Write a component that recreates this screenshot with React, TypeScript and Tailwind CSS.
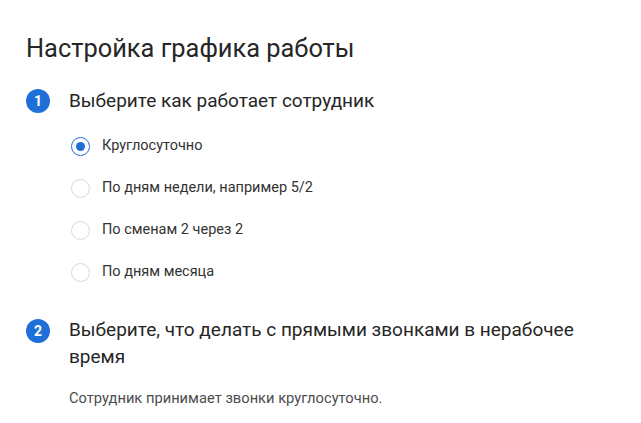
const options = [
  'Круглосуточно',
  'По дням недели, например 5/2',
  'По сменам 2 через 2',
  'По дням месяца',
];

function StepBadge({ n }: { n: number }) {
  return (
    <span className="flex h-6 w-6 shrink-0 items-center justify-center rounded-full bg-[#1f6fd8] text-[14px] font-bold text-white">
      {n}
    </span>
  );
}

function Radio({ checked }: { checked: boolean }) {
  return (
    <span
      className={`flex h-[19px] w-[19px] shrink-0 items-center justify-center rounded-full border ${
        checked ? 'border-[#1f6fd8]' : 'border-[#d9d9d9]'
      }`}
    >
      {checked && <span className="h-[9px] w-[9px] rounded-full bg-[#1f6fd8]" />}
    </span>
  );
}

export default function App() {
  return (
    <div className="min-h-screen bg-white pl-[26px] pt-[32px] font-['Roboto',sans-serif] text-[#262626]">
      <h1 className="text-[25.4px] leading-[32px]">Настройка графика работы</h1>

      <div className="mt-[24px] flex items-center gap-[19px]">
        <StepBadge n={1} />
        <h2 className="text-[19px] leading-[26px]">Выберите как работает сотрудник</h2>
      </div>

      <div className="ml-[45px] mt-[21px] flex flex-col gap-[20px]">
        {options.map((o, i) => (
          <label key={o} className="flex h-[22px] items-center gap-[12px] text-[14.5px] text-[#333]">
            <Radio checked={i === 0} />
            <span>{o}</span>
          </label>
        ))}
      </div>

      <div className="mt-[33px] flex items-start gap-[19px]">
        <div className="pt-[3px]">
          <StepBadge n={2} />
        </div>
        <h2 className="w-[520px] text-[19px] leading-[27px]">
          Выберите, что делать с прямыми звонками в нерабочее время
        </h2>
      </div>

      <p className="ml-[43px] mt-[18px] text-[14.7px] leading-[20px] text-[#4d4d4d]">
        Сотрудник принимает звонки круглосуточно.
      </p>
    </div>
  );
}
